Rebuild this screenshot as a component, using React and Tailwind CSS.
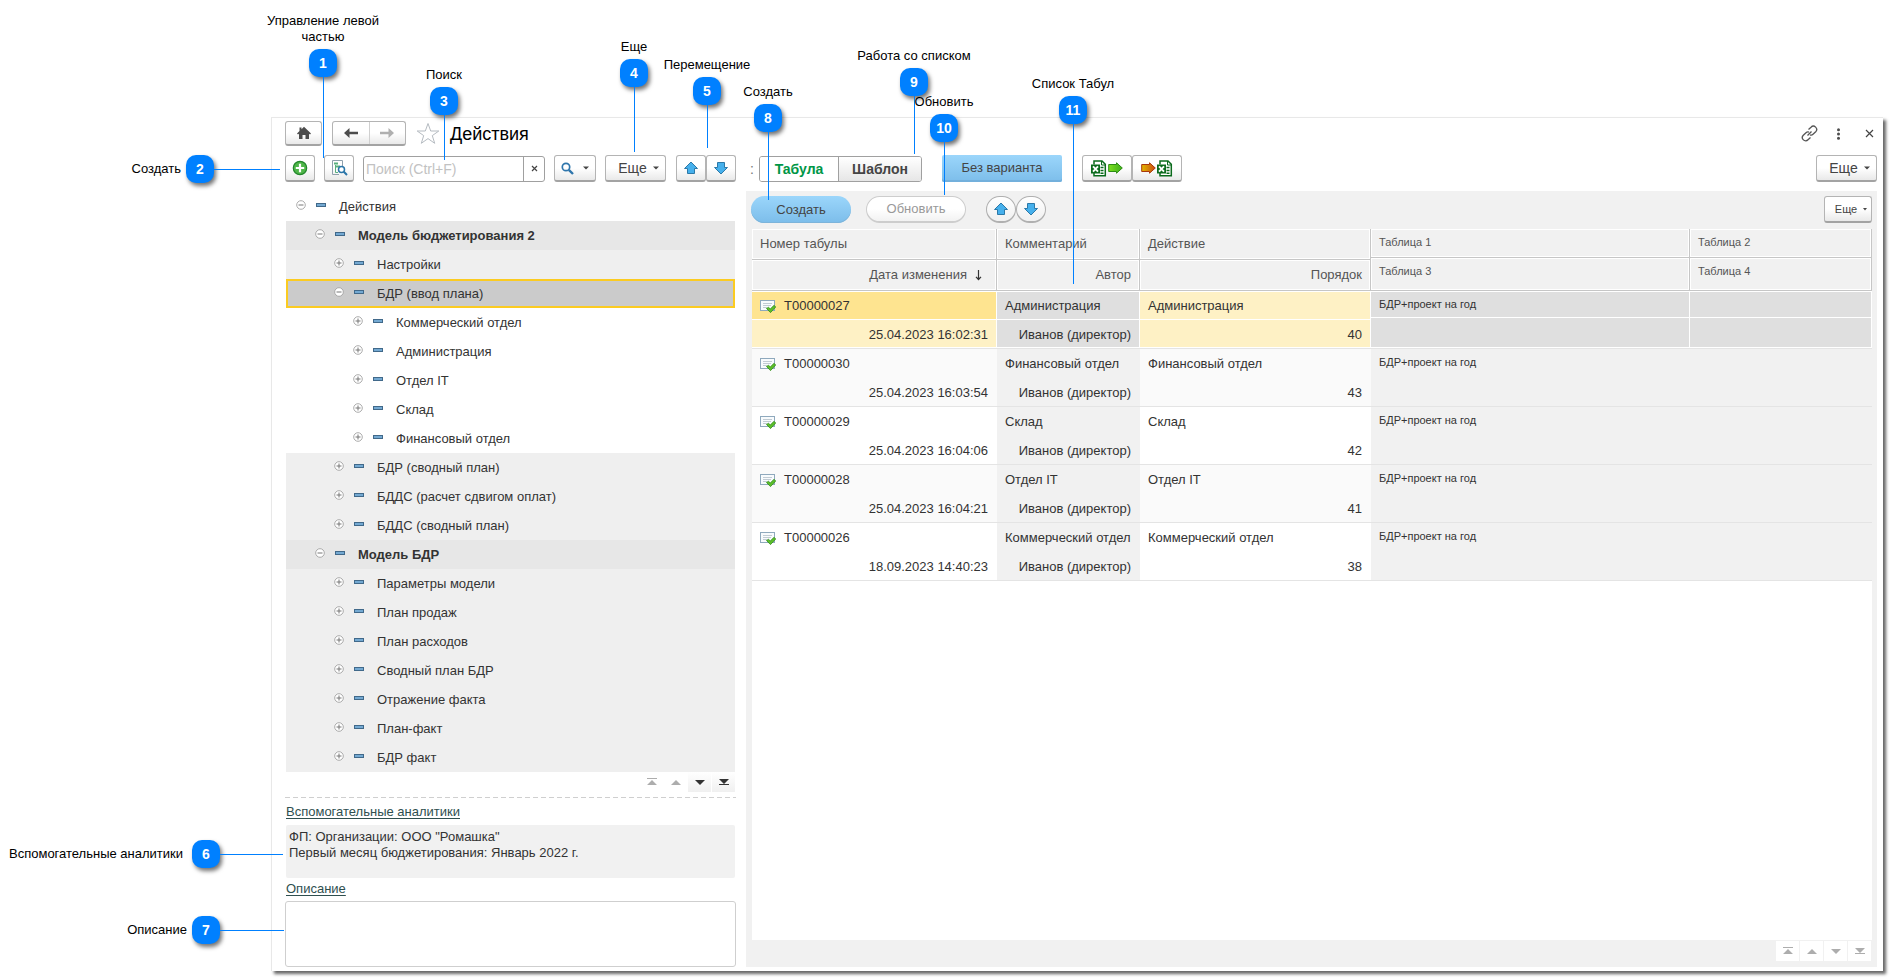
import React from "react";

const btn =
  "flex items-center justify-center rounded-[3px] border border-[#b4b4b4] border-b-2 border-b-[#a3a3a3] bg-linear-to-b from-white from-50% to-[#e9e9e9]";

const tree = [
  { level: 0, text: "Действия", open: true, tone: "plain" },
  { level: 1, text: "Модель бюджетирования 2", open: true, tone: "group" },
  { level: 2, text: "Настройки", tone: "sub" },
  { level: 2, text: "БДР (ввод плана)", open: true, tone: "selected" },
  { level: 3, text: "Коммерческий отдел", tone: "plain" },
  { level: 3, text: "Администрация", tone: "plain" },
  { level: 3, text: "Отдел IT", tone: "plain" },
  { level: 3, text: "Склад", tone: "plain" },
  { level: 3, text: "Финансовый отдел", tone: "plain" },
  { level: 2, text: "БДР (сводный план)", tone: "sub" },
  { level: 2, text: "БДДС (расчет сдвигом оплат)", tone: "sub" },
  { level: 2, text: "БДДС (сводный план)", tone: "sub" },
  { level: 1, text: "Модель БДР", open: true, tone: "group" },
  { level: 2, text: "Параметры модели", tone: "sub" },
  { level: 2, text: "План продаж", tone: "sub" },
  { level: 2, text: "План расходов", tone: "sub" },
  { level: 2, text: "Сводный план БДР", tone: "sub" },
  { level: 2, text: "Отражение факта", tone: "sub" },
  { level: 2, text: "План-факт", tone: "sub" },
  { level: 2, text: "БДР факт", tone: "sub" },
];

const indents = ["pl-[10px]", "pl-[29px]", "pl-[48px]", "pl-[67px]"];
const tones = {
  plain: "bg-white",
  group: "bg-[#e7e7e7] font-bold",
  sub: "bg-[#efefef]",
  selected: "bg-[#cbcbcb] outline-2 -outline-offset-2 outline-[#fbcb21]",
};

const rows = [
  { id: "T00000027", date: "25.04.2023 16:02:31", dept: "Администрация", order: 40, selected: true },
  { id: "T00000030", date: "25.04.2023 16:03:54", dept: "Финансовый отдел", order: 43 },
  { id: "T00000029", date: "25.04.2023 16:04:06", dept: "Склад", order: 42 },
  { id: "T00000028", date: "25.04.2023 16:04:21", dept: "Отдел IT", order: 41 },
  { id: "T00000026", date: "18.09.2023 14:40:23", dept: "Коммерческий отдел", order: 38 },
];

const topCallouts = [
  { n: 1, text: "Управление левой частью", pos: "left-[309px] top-[13px]", line: "h-[81px]", label: "w-[116px]" },
  { n: 3, text: "Поиск", pos: "left-[430px] top-[67px]", line: "h-[45px]" },
  { n: 4, text: "Еще", pos: "left-[620px] top-[39px]", line: "h-[65px]" },
  { n: 5, text: "Перемещение", pos: "left-[693px] top-[57px]", line: "h-[43px]" },
  { n: 8, text: "Создать", pos: "left-[754px] top-[84px]", line: "h-[68px]" },
  { n: 9, text: "Работа со списком", pos: "left-[900px] top-[48px]", line: "h-[58px]" },
  { n: 10, text: "Обновить", pos: "left-[930px] top-[94px]", line: "h-[53px]" },
  { n: 11, text: "Список Табул", pos: "left-[1059px] top-[76px]", line: "h-[160px]" },
];

const sideCallouts = [
  { n: 2, text: "Создать", pos: "top-[155px] w-[280px]", line: "w-[66px]", gap: "gap-[5px]" },
  { n: 6, text: "Вспомогательные аналитики", pos: "top-[840px] w-[283px]", line: "w-[63px]", gap: "gap-[9px]" },
  { n: 7, text: "Описание", pos: "top-[916px] w-[284px]", line: "w-[64px]", gap: "gap-[5px]" },
];

function Badge({ n }) {
  return (
    <span className="flex size-7 shrink-0 items-center justify-center rounded-[10px] bg-[#0080ff] text-sm font-bold text-white shadow-[2px_3px_4px_rgba(0,0,0,0.55)]">
      {n}
    </span>
  );
}

function Callouts() {
  return (
    <div className="pointer-events-none absolute inset-0 overflow-hidden text-[13px] leading-4 text-black">
      {topCallouts.map((c) => (
        <div key={c.n} className={`absolute flex w-7 flex-col items-center ${c.pos}`}>
          <span className={`mb-1 text-center ${c.label || "whitespace-nowrap"}`}>{c.text}</span>
          <Badge n={c.n} />
          <span className={`ml-[14px] w-px self-start bg-[#0080ff] ${c.line}`} />
        </div>
      ))}
      {sideCallouts.map((c) => (
        <div key={c.n} className={`absolute left-0 flex items-center justify-end ${c.pos}`}>
          <div className={`flex items-center ${c.gap}`}>
            <span className="whitespace-nowrap">{c.text}</span>
            <Badge n={c.n} />
          </div>
          <span className={`h-px bg-[#0080ff] ${c.line}`} />
        </div>
      ))}
    </div>
  );
}

function ArrowIcon({ down }) {
  return (
    <svg width="16" height="14" viewBox="0 0 16 14" className={down ? "rotate-180" : ""} aria-hidden="true">
      <path d="M8 1 L14.5 7.5 H11.5 V12.5 H4.5 V7.5 H1.5 Z" fill="#46b0ec" stroke="#2c79a8" strokeLinejoin="round" />
    </svg>
  );
}

function Caret() {
  return (
    <svg width="6" height="4" viewBox="0 0 6 4" aria-hidden="true">
      <path d="M0 0.500H6L3 3.500Z" fill="#444" />
    </svg>
  );
}

function Excel() {
  return (
    <svg width="16" height="17" viewBox="0 0 16 17" aria-hidden="true">
      <path d="M3 4.500 V1 H11 L14.300 4.300 V15.800 H3 V13" fill="#fff" stroke="#0b6b1c" strokeWidth="1.500" />
      <path d="M10.500 1 V5 H14.500" fill="none" stroke="#0b6b1c" />
      <path d="M9.500 7.500H12.500M9.500 10.500H12.500M9.500 13.300H12.500" stroke="#0b6b1c" strokeWidth="1.400" />
      <rect x="0" y="4.500" width="9" height="9" fill="#0b6b1c" />
      <path d="M2 6.300 L7 11.700 M7 6.300 L2 11.700" stroke="#fff" strokeWidth="1.900" />
    </svg>
  );
}

function FatArrow({ orange }) {
  const id = orange ? "arrow-orange" : "arrow-green";
  return (
    <svg width="15" height="12" viewBox="0 0 15 12" aria-hidden="true">
      <defs>
        <linearGradient id={id}>
          <stop offset="0" stopColor={orange ? "#e3b800" : "#7be01c"} />
          <stop offset="1" stopColor={orange ? "#c94a10" : "#3fae1c"} />
        </linearGradient>
      </defs>
      <path
        d="M0.700 2.500 H8.500 V0.800 L14.300 6 L8.500 11.200 V9.500 H0.700 Z"
        fill={`url(#${id})`}
        stroke={orange ? "#a8380c" : "#2c8c14"}
      />
    </svg>
  );
}

function Pager({ dark, boxed }) {
  const icons = [
    { label: "В начало", d: "M7 3 L12 8 H2 Z M2 1 H12 V2 H2 Z" },
    { label: "Вверх", d: "M7 3 L12 8 H2 Z" },
    { label: "Вниз", d: "M2 3 H12 L7 8 Z", active: dark },
    { label: "В конец", d: "M2 2 H12 L7 7 Z M2 7 H12 V8 H2 Z", active: dark },
  ];
  return (
    <div className="flex gap-px">
      {icons.map((i) => (
        <button
          key={i.label}
          aria-label={i.label}
          className={`flex h-5 w-[23px] items-center justify-center ${
            boxed ? "bg-white" : i.active ? "bg-linear-to-b from-white to-[#f0f0f0]" : ""
          }`}
        >
          <svg width="14" height="10" viewBox="0 0 14 10" aria-hidden="true">
            <path d={i.d} fill={i.active ? "#333" : "#adadad"} />
          </svg>
        </button>
      ))}
    </div>
  );
}

function TreeRow({ item }) {
  return (
    <li className={`flex h-[29px] items-center ${indents[item.level]} ${tones[item.tone]}`}>
      <button aria-label={item.open ? "Свернуть" : "Развернуть"} className="mr-[10px] pb-[3px]">
        <svg width="10" height="10" viewBox="0 0 10 10" aria-hidden="true" className="block">
          <circle cx="5" cy="5" r="4.300" fill="#fff" stroke="#a3a3a3" strokeWidth="0.900" />
          <path d={item.open ? "M2.500 5H7.500" : "M2.500 5H7.500M5 2.500V7.500"} stroke="#777" />
        </svg>
      </button>
      <span className="mb-1 h-1 w-[10px] border border-[#41698a] bg-[#74a9d2]" />
      <span className="ml-[13px]">{item.text}</span>
    </li>
  );
}

function HeadCell({ first, second, small, sorted }) {
  const cell = "border-r border-b border-[#c6c6c6] px-2 shadow-[inset_0_0_0_1px_#fff]";
  if (small) {
    return (
      <th className="p-0 text-left text-[11px] leading-4 font-normal">
        <div className={`h-[29px] pt-[5px] ${cell}`}>{first}</div>
        <div className={`h-[33px] pt-[5px] ${cell}`}>{second}</div>
      </th>
    );
  }
  return (
    <th className="p-0 text-left font-normal">
      <div className={`flex h-[31px] items-center ${cell}`}>{first}</div>
      <div className={`flex h-[31px] items-center justify-end ${cell}`}>
        {second}
        {sorted && (
          <svg width="7" height="12" viewBox="0 0 7 12" className="mr-[6px] ml-2" aria-hidden="true">
            <path d="M3.500 1V10M1 7.800L3.500 10.500L6 7.800" fill="none" stroke="#333" strokeWidth="1.200" />
          </svg>
        )}
      </div>
    </th>
  );
}

function Cell({ first, second, a, b, selected, small }) {
  const edge = selected ? "border-white" : "border-transparent";
  return (
    <td className={`border-b border-[#e4e4e4] p-0 align-top ${small ? "text-[11px]" : ""}`}>
      <div className={`flex border-t border-r border-b px-2 ${small ? "h-[27px] pt-1" : "h-[29px] items-center"} ${edge} ${a}`}>
        {first}
      </div>
      <div className={`flex items-end justify-end border-r border-b px-2 pb-1 ${small ? "h-[30px]" : "h-[28px]"} ${edge} ${b}`}>
        {second}
      </div>
    </td>
  );
}

function DocIcon() {
  return (
    <svg width="16" height="14" viewBox="0 0 16 14" className="mr-2 shrink-0" aria-hidden="true">
      <rect x="0.500" y="1.500" width="14" height="10" fill="#f8fbfd" stroke="#8fa9bd" />
      <path d="M3 4.500H12M3 6.500H11M3 8.500H7" stroke="#c2ccd4" />
      <path d="M6.500 9.500L8.500 8.300L10.300 10L14 6.300L15.700 8L10.500 13.600Z" fill="#5cbf2a" stroke="#2f8a16" strokeWidth="0.800" />
    </svg>
  );
}

export default function App() {
  return (
    <div className="relative flex min-h-screen flex-col bg-white pt-[117px] pr-[9px] pb-[9px] pl-[271px] font-['Liberation_Sans',Arial,sans-serif] text-[13px] leading-4 text-[#333]">
      <main className="flex flex-1 flex-col border-t border-l border-[#e8e8e8] bg-white pt-[3px] pr-[6px] pb-1 pl-[13px] shadow-[3px_3px_3px_0_rgba(0,0,0,0.6)]">
        <header className="flex h-[25px] items-center">
          <button aria-label="Домой" className={`h-[25px] w-[37px] ${btn}`}>
            <svg width="16" height="14" viewBox="0 0 16 14" aria-hidden="true">
              <path d="M8 0.800L15 7.500L14 8.500L13 7.700V13H9.500V9H6.500V13H3V7.700L2 8.500L1 7.500L3.500 5V1.500H5.500V3.200Z" fill="#4d4d4d" />
            </svg>
          </button>
          <div className={`ml-[10px] h-[25px] w-[74px] ${btn}`}>
            <button aria-label="Назад" className="flex h-full flex-1 items-center justify-center border-r border-[#d0d0d0]">
              <svg width="16" height="12" viewBox="0 0 16 12" aria-hidden="true">
                <path d="M1 6L6.500 1V4.700H15V7.300H6.500V11Z" fill="#4d4d4d" />
              </svg>
            </button>
            <button aria-label="Вперед" className="flex h-full flex-1 items-center justify-center">
              <svg width="16" height="12" viewBox="0 0 16 12" aria-hidden="true">
                <path d="M15 6L9.500 1V4.700H1V7.300H9.500V11Z" fill="#b0b0b0" />
              </svg>
            </button>
          </div>
          <button aria-label="В избранное" className="ml-[10px]">
            <svg width="24" height="23" viewBox="0 0 24 23" className="block" aria-hidden="true">
              <path d="M12 1.500L14.700 9H22.800L16.300 13.600L18.700 21.300L12 16.600L5.300 21.300L7.700 13.600L1.200 9H9.300Z" fill="#fff" stroke="#b5bbc1" />
            </svg>
          </button>
          <h1 className="ml-[10px] text-lg text-black">Действия</h1>
          <div className="ml-auto flex items-center text-[#444]">
            <button aria-label="Ссылка">
              <svg width="17" height="17" viewBox="0 0 17 17" fill="none" stroke="#555" strokeWidth="1.300" className="block" aria-hidden="true">
                <path d="M7.500 4.500L10 2.200A3.100 3.100 0 0 1 14.700 6.700L12 9.300A2.800 2.800 0 0 1 9 9.900M9.500 12.500L7 14.800A3.100 3.100 0 0 1 2.300 10.300L5 7.700A2.800 2.800 0 0 1 8 7.100M6.500 10.500L10.500 6.500" />
              </svg>
            </button>
            <button aria-label="Меню" className="ml-[18px]">
              <svg width="5" height="12" viewBox="0 0 5 12" fill="#4d4d4d" className="block" aria-hidden="true">
                <circle cx="2.500" cy="1.700" r="1.500" /><circle cx="2.500" cy="6" r="1.500" /><circle cx="2.500" cy="10.300" r="1.500" />
              </svg>
            </button>
            <button aria-label="Закрыть" className="mr-[3px] ml-6">
              <svg width="9" height="9" viewBox="0 0 9 9" stroke="#444" strokeWidth="1.200" className="block" aria-hidden="true">
                <path d="M1 1L8 8M8 1L1 8" />
              </svg>
            </button>
          </div>
        </header>

        <div className="mt-[9px] flex h-[27px] items-center text-sm">
          <button aria-label="Создать" className={`h-[27px] w-[30px] ${btn}`}>
            <svg width="16" height="16" viewBox="0 0 16 16" aria-hidden="true">
              <circle cx="8" cy="8" r="6.700" fill="#4fb649" stroke="#23862c" strokeWidth="1.200" />
              <path d="M8 3.800V12.200M3.800 8H12.200" stroke="#fff" strokeWidth="2.200" />
            </svg>
          </button>
          <button aria-label="Управление левой частью" className={`ml-[9px] h-[27px] w-[30px] ${btn}`}>
            <svg width="17" height="16" viewBox="0 0 17 16" fill="none" aria-hidden="true">
              <path d="M8 14.500H1.500V0.500H11.500V6" stroke="#8fa0ad" />
              <path d="M3 3.500H7M5 6.500H9" stroke="#58b07c" strokeWidth="2" />
              <path d="M4.500 5V12.500H7" stroke="#58b07c" />
              <circle cx="10.500" cy="9.500" r="3" fill="#fff" stroke="#2a75a8" strokeWidth="1.500" />
              <path d="M12.800 11.800L16 15" stroke="#2a75a8" strokeWidth="2" />
            </svg>
          </button>
          <div className="ml-[9px] flex h-[26px] w-[182px] rounded-[3px] border border-[#a0a0a0] bg-white">
            <input
              type="text"
              aria-label="Поиск"
              placeholder="Поиск (Ctrl+F)"
              className="min-w-0 flex-1 px-[2px] text-sm outline-none placeholder:text-[#c2c2c2]"
            />
            <button aria-label="Очистить" className="flex w-[21px] items-center justify-center border-l border-[#a0a0a0]">
              <svg width="7" height="7" viewBox="0 0 7 7" stroke="#444" strokeWidth="1.200" aria-hidden="true">
                <path d="M1 1L6 6M6 1L1 6" />
              </svg>
            </button>
          </div>
          <button aria-label="Найти" className={`ml-[9px] h-[27px] w-[42px] gap-[9px] ${btn}`}>
            <svg width="13" height="13" viewBox="0 0 13 13" fill="none" stroke="#2f76ac" aria-hidden="true">
              <circle cx="5" cy="5" r="3.700" strokeWidth="1.700" />
              <path d="M7.800 7.800L12 12" strokeWidth="2.400" />
            </svg>
            <Caret />
          </button>
          <button className={`ml-[9px] h-[27px] w-[61px] gap-[6px] pl-[6px] text-[#444] ${btn}`}>
            Еще <Caret />
          </button>
          <button aria-label="Переместить вверх" className={`ml-[10px] h-[27px] w-[30px] ${btn}`}><ArrowIcon /></button>
          <button aria-label="Переместить вниз" className={`h-[27px] w-[30px] ${btn}`}><ArrowIcon down /></button>
          <span className="ml-[14px] w-[9px] text-[#777]">:</span>
          <div className="flex h-[26px] w-[163px] overflow-hidden rounded-[3px] border border-[#a0a0a0] text-sm font-bold">
            <button className="w-[79px] border-r border-[#a0a0a0] bg-white text-[#009646]">Табула</button>
            <button className="flex-1 bg-linear-to-b from-white to-[#e6e6e6] text-[#444]">Шаблон</button>
          </div>
          <button className="ml-5 h-[27px] w-[120px] rounded-[2px] bg-linear-to-b from-[#9bd6fb] to-[#7cbdea] text-[13px] text-[#444] shadow-[inset_0_-2px_0_#73b0dc]">
            Без варианта
          </button>
          <button aria-label="Выгрузить в Excel" className={`ml-5 h-[27px] w-[50px] gap-px ${btn}`}><Excel /><FatArrow /></button>
          <button aria-label="Загрузить из Excel" className={`h-[27px] w-[50px] gap-px ${btn}`}><FatArrow orange /><Excel /></button>
          <button className={`ml-auto h-[27px] w-[61px] gap-[6px] pl-[6px] text-[#444] ${btn}`}>
            Еще <Caret />
          </button>
        </div>

        <div className="mt-[9px] flex flex-1 gap-[10px]">
          <aside className="flex w-[451px] shrink-0 flex-col">
            <ul className="mx-px mt-px">
              {tree.map((item) => <TreeRow key={item.text} item={item} />)}
            </ul>
            <div className="flex h-[25px] items-start justify-end pr-px">
              <Pager dark />
            </div>
            <svg width="100%" height="1" className="block" aria-hidden="true">
              <path d="M0 0.500H2000" stroke="#cfcfcf" strokeDasharray="5 3" />
            </svg>
            <a href="#analytics" className="mt-[6px] ml-px self-start text-[#2f4f4f] underline underline-offset-2">Вспомогательные аналитики</a>
            <div className="mx-px mt-[5px] h-[53px] rounded-[2px] bg-[#f1f1f1] px-[3px] pt-1">
              <p>ФП: Организации: ООО "Ромашка"</p>
              <p>Первый месяц бюджетирования: Январь 2022 г.</p>
            </div>
            <a href="#description" className="mt-[3px] ml-px self-start text-[#2f4f4f] underline underline-offset-2">Описание</a>
            <textarea aria-label="Описание" className="mt-1 min-h-[66px] flex-1 resize-none rounded-[3px] border border-[#cfcfcf] bg-white outline-none" />
          </aside>

          <section className="flex min-w-0 flex-1 flex-col bg-[#f1f1f1] pt-[5px] pr-[5px] pl-[6px]">
            <div className="-ml-px flex h-[27px] items-center">
              <button className="h-[27px] w-[100px] rounded-full bg-linear-to-b from-[#9bd6fb] to-[#7cbdea] text-[#444] shadow-[inset_0_-1px_0_#7db4da]">Создать</button>
              <button className="ml-[15px] h-[27px] w-[100px] rounded-full border border-b-2 border-[#cdcdcd] bg-linear-to-b from-white from-50% to-[#f2f2f2] text-[#999]">Обновить</button>
              <button aria-label="Вверх по списку" className="ml-5 flex h-[27px] w-[30px] items-center justify-center rounded-full border border-b-2 border-[#b0b0b0] bg-linear-to-b from-white to-[#f0f0f0]"><ArrowIcon /></button>
              <button aria-label="Вниз по списку" className="flex h-[27px] w-[30px] items-center justify-center rounded-full border border-b-2 border-[#b0b0b0] bg-linear-to-b from-white to-[#f0f0f0]"><ArrowIcon down /></button>
              <button className={`ml-auto h-[27px] w-12 gap-[6px] pl-[6px] text-[11px] text-[#444] ${btn}`}>
                Еще
                <svg width="4" height="3" viewBox="0 0 4 3" aria-hidden="true"><path d="M0 0H4L2 2.500Z" fill="#444" /></svg>
              </button>
            </div>

            <div className="mt-[6px] flex-1 bg-white">
              <table className="w-full table-fixed border-separate border-spacing-0">
                <colgroup>
                  <col className="w-[245px]" />
                  <col className="w-[143px]" />
                  <col className="w-[231px]" />
                  <col />
                  <col className="w-[182px]" />
                </colgroup>
                <thead className="bg-[#f1f1f1] text-[#555]">
                  <tr>
                    <HeadCell first="Номер табулы" second="Дата изменения" sorted />
                    <HeadCell first="Комментарий" second="Автор" />
                    <HeadCell first="Действие" second="Порядок" />
                    <HeadCell small first="Таблица 1" second="Таблица 3" />
                    <HeadCell small first="Таблица 2" second="Таблица 4" />
                  </tr>
                </thead>
                <tbody>
                  {rows.map((r, i) => {
                    const base = i % 2 ? "bg-[#fafafa]" : "bg-white";
                    const light = r.selected ? "bg-[#fef1c5]" : base;
                    const grey = r.selected ? "bg-[#dfdfdf]" : "bg-[#f1f1f1]";
                    return (
                      <tr key={r.id}>
                        <Cell selected={r.selected} first={<><DocIcon />{r.id}</>} second={r.date} a={r.selected ? "bg-[#fee490]" : base} b={light} />
                        <Cell selected={r.selected} first={<span className="whitespace-nowrap">{r.dept}</span>} second="Иванов (директор)" a={grey} b={grey} />
                        <Cell selected={r.selected} first={r.dept} second={r.order} a={light} b={light} />
                        <Cell selected={r.selected} small first="БДР+проект на год" a={grey} b={grey} />
                        <Cell selected={r.selected} small a={grey} b={grey} />
                      </tr>
                    );
                  })}
                </tbody>
              </table>
            </div>
            <footer className="flex h-[27px] justify-end pt-px pr-px">
              <Pager boxed />
            </footer>
          </section>
        </div>
      </main>
      <Callouts />
    </div>
  );
}
